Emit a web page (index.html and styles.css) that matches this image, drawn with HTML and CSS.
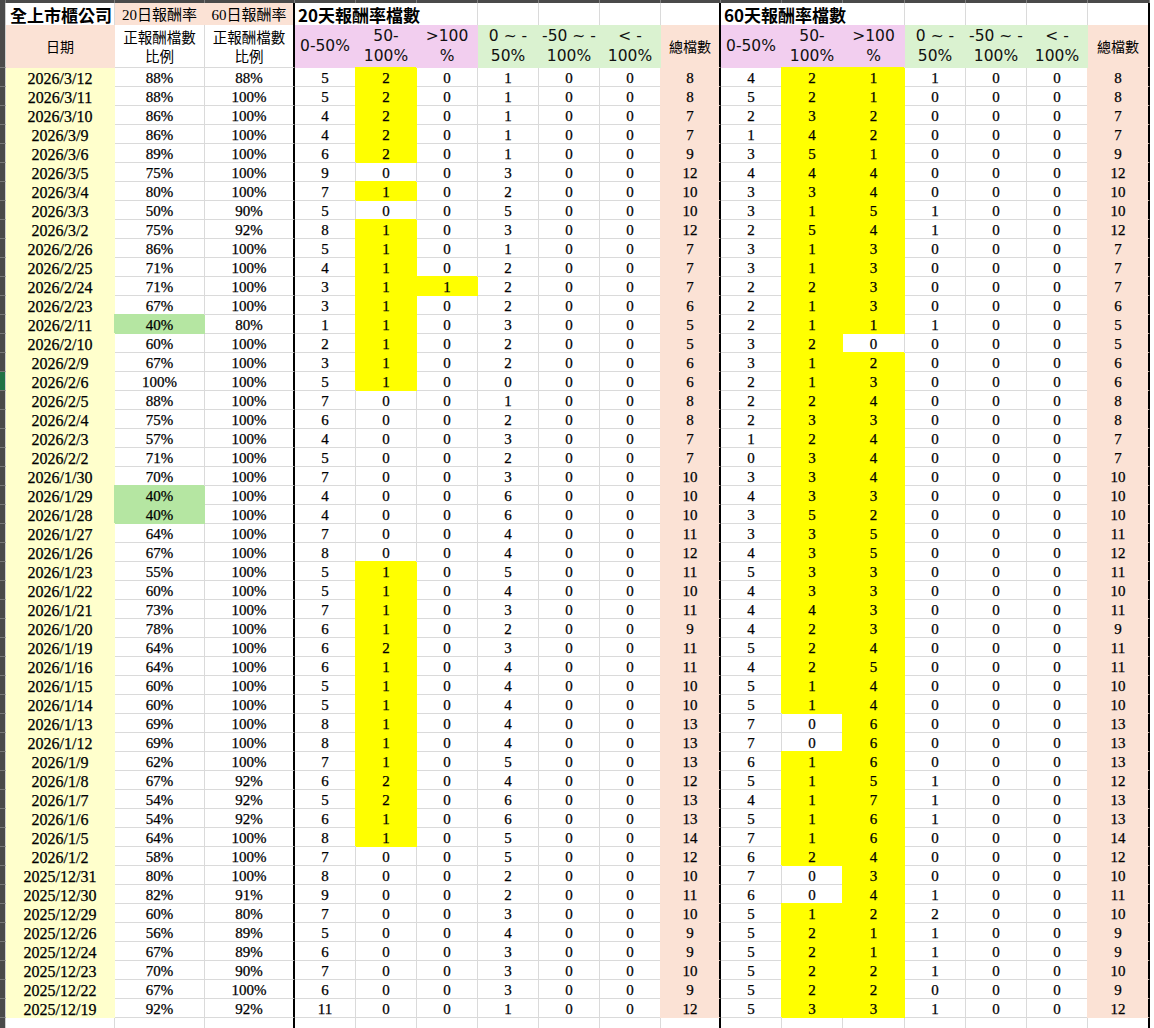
FILE: index.html
```html
<!DOCTYPE html>
<html lang="zh-Hant">
<head>
<meta charset="utf-8">
<title>全上市櫃公司 報酬率檔數</title>
<link rel="stylesheet" href="styles.css">
</head>
<body>
<table class="sheet">
<colgroup>
<col class="w-rh"><col class="w-a"><col class="w-b"><col class="w-b">
<col class="w-n"><col class="w-n"><col class="w-n"><col class="w-n"><col class="w-n"><col class="w-n"><col class="w-j">
<col class="w-n"><col class="w-n"><col class="w-m"><col class="w-n"><col class="w-n"><col class="w-n"><col class="w-m">
</colgroup>
<thead>
<tr class="top"><td></td><td></td><td></td><td></td><td></td><td></td><td></td><td></td><td></td><td></td><td></td><td></td><td></td><td></td><td></td><td></td><td></td><td></td></tr>
<tr class="r1">
<td class="rh"></td>
<td class="title">全上市櫃公司</td>
<td class="pe hs">20日報酬率</td>
<td class="pe hs sep">60日報酬率</td>
<td class="title" colspan="3">20天報酬率檔數</td>
<td></td><td></td><td></td><td class="sep"></td>
<td class="title" colspan="3">60天報酬率檔數</td>
<td></td><td></td><td></td><td class="sep"></td>
</tr>
<tr class="r2">
<td class="rh"></td>
<td class="pe cj">日期</td>
<td class="cj">正報酬檔數<br>比例</td>
<td class="cj sep">正報酬檔數<br>比例</td>
<td class="pk lt">0-50%</td>
<td class="pk lt">50-<br>100%</td>
<td class="pk lt">&gt;100<br>%</td>
<td class="gr lt">0 ~ -<br>50%</td>
<td class="gr lt">-50 ~ -<br>100%</td>
<td class="gr lt">&lt; -<br>100%</td>
<td class="pe cj sep">總檔數</td>
<td class="pk lt">0-50%</td>
<td class="pk lt">50-<br>100%</td>
<td class="pk lt">&gt;100<br>%</td>
<td class="gr lt">0 ~ -<br>50%</td>
<td class="gr lt">-50 ~ -<br>100%</td>
<td class="gr lt">&lt; -<br>100%</td>
<td class="pe cj sep">總檔數</td>
</tr>
</thead>
<tbody>
<tr><td></td><td>2026/3/12</td><td>88%</td><td>88%</td><td>5</td><td class="y">2</td><td>0</td><td>1</td><td>0</td><td>0</td><td>8</td><td>4</td><td class="y">2</td><td class="y">1</td><td>1</td><td>0</td><td>0</td><td>8</td></tr>
<tr><td></td><td>2026/3/11</td><td>88%</td><td>100%</td><td>5</td><td class="y">2</td><td>0</td><td>1</td><td>0</td><td>0</td><td>8</td><td>5</td><td class="y">2</td><td class="y">1</td><td>0</td><td>0</td><td>0</td><td>8</td></tr>
<tr><td></td><td>2026/3/10</td><td>86%</td><td>100%</td><td>4</td><td class="y">2</td><td>0</td><td>1</td><td>0</td><td>0</td><td>7</td><td>2</td><td class="y">3</td><td class="y">2</td><td>0</td><td>0</td><td>0</td><td>7</td></tr>
<tr><td></td><td>2026/3/9</td><td>86%</td><td>100%</td><td>4</td><td class="y">2</td><td>0</td><td>1</td><td>0</td><td>0</td><td>7</td><td>1</td><td class="y">4</td><td class="y">2</td><td>0</td><td>0</td><td>0</td><td>7</td></tr>
<tr><td></td><td>2026/3/6</td><td>89%</td><td>100%</td><td>6</td><td class="y">2</td><td>0</td><td>1</td><td>0</td><td>0</td><td>9</td><td>3</td><td class="y">5</td><td class="y">1</td><td>0</td><td>0</td><td>0</td><td>9</td></tr>
<tr><td></td><td>2026/3/5</td><td>75%</td><td>100%</td><td>9</td><td>0</td><td>0</td><td>3</td><td>0</td><td>0</td><td>12</td><td>4</td><td class="y">4</td><td class="y">4</td><td>0</td><td>0</td><td>0</td><td>12</td></tr>
<tr><td></td><td>2026/3/4</td><td>80%</td><td>100%</td><td>7</td><td class="y">1</td><td>0</td><td>2</td><td>0</td><td>0</td><td>10</td><td>3</td><td class="y">3</td><td class="y">4</td><td>0</td><td>0</td><td>0</td><td>10</td></tr>
<tr><td></td><td>2026/3/3</td><td>50%</td><td>90%</td><td>5</td><td>0</td><td>0</td><td>5</td><td>0</td><td>0</td><td>10</td><td>3</td><td class="y">1</td><td class="y">5</td><td>1</td><td>0</td><td>0</td><td>10</td></tr>
<tr><td></td><td>2026/3/2</td><td>75%</td><td>92%</td><td>8</td><td class="y">1</td><td>0</td><td>3</td><td>0</td><td>0</td><td>12</td><td>2</td><td class="y">5</td><td class="y">4</td><td>1</td><td>0</td><td>0</td><td>12</td></tr>
<tr><td></td><td>2026/2/26</td><td>86%</td><td>100%</td><td>5</td><td class="y">1</td><td>0</td><td>1</td><td>0</td><td>0</td><td>7</td><td>3</td><td class="y">1</td><td class="y">3</td><td>0</td><td>0</td><td>0</td><td>7</td></tr>
<tr><td></td><td>2026/2/25</td><td>71%</td><td>100%</td><td>4</td><td class="y">1</td><td>0</td><td>2</td><td>0</td><td>0</td><td>7</td><td>3</td><td class="y">1</td><td class="y">3</td><td>0</td><td>0</td><td>0</td><td>7</td></tr>
<tr><td></td><td>2026/2/24</td><td>71%</td><td>100%</td><td>3</td><td class="y">1</td><td class="y">1</td><td>2</td><td>0</td><td>0</td><td>7</td><td>2</td><td class="y">2</td><td class="y">3</td><td>0</td><td>0</td><td>0</td><td>7</td></tr>
<tr><td></td><td>2026/2/23</td><td>67%</td><td>100%</td><td>3</td><td class="y">1</td><td>0</td><td>2</td><td>0</td><td>0</td><td>6</td><td>2</td><td class="y">1</td><td class="y">3</td><td>0</td><td>0</td><td>0</td><td>6</td></tr>
<tr><td></td><td>2026/2/11</td><td class="g">40%</td><td>80%</td><td>1</td><td class="y">1</td><td>0</td><td>3</td><td>0</td><td>0</td><td>5</td><td>2</td><td class="y">1</td><td class="y">1</td><td>1</td><td>0</td><td>0</td><td>5</td></tr>
<tr><td></td><td>2026/2/10</td><td>60%</td><td>100%</td><td>2</td><td class="y">1</td><td>0</td><td>2</td><td>0</td><td>0</td><td>5</td><td>3</td><td class="y">2</td><td>0</td><td>0</td><td>0</td><td>0</td><td>5</td></tr>
<tr><td></td><td>2026/2/9</td><td>67%</td><td>100%</td><td>3</td><td class="y">1</td><td>0</td><td>2</td><td>0</td><td>0</td><td>6</td><td>3</td><td class="y">1</td><td class="y">2</td><td>0</td><td>0</td><td>0</td><td>6</td></tr>
<tr><td class="sel"></td><td>2026/2/6</td><td>100%</td><td>100%</td><td>5</td><td class="y">1</td><td>0</td><td>0</td><td>0</td><td>0</td><td>6</td><td>2</td><td class="y">1</td><td class="y">3</td><td>0</td><td>0</td><td>0</td><td>6</td></tr>
<tr><td></td><td>2026/2/5</td><td>88%</td><td>100%</td><td>7</td><td>0</td><td>0</td><td>1</td><td>0</td><td>0</td><td>8</td><td>2</td><td class="y">2</td><td class="y">4</td><td>0</td><td>0</td><td>0</td><td>8</td></tr>
<tr><td></td><td>2026/2/4</td><td>75%</td><td>100%</td><td>6</td><td>0</td><td>0</td><td>2</td><td>0</td><td>0</td><td>8</td><td>2</td><td class="y">3</td><td class="y">3</td><td>0</td><td>0</td><td>0</td><td>8</td></tr>
<tr><td></td><td>2026/2/3</td><td>57%</td><td>100%</td><td>4</td><td>0</td><td>0</td><td>3</td><td>0</td><td>0</td><td>7</td><td>1</td><td class="y">2</td><td class="y">4</td><td>0</td><td>0</td><td>0</td><td>7</td></tr>
<tr><td></td><td>2026/2/2</td><td>71%</td><td>100%</td><td>5</td><td>0</td><td>0</td><td>2</td><td>0</td><td>0</td><td>7</td><td>0</td><td class="y">3</td><td class="y">4</td><td>0</td><td>0</td><td>0</td><td>7</td></tr>
<tr><td></td><td>2026/1/30</td><td>70%</td><td>100%</td><td>7</td><td>0</td><td>0</td><td>3</td><td>0</td><td>0</td><td>10</td><td>3</td><td class="y">3</td><td class="y">4</td><td>0</td><td>0</td><td>0</td><td>10</td></tr>
<tr><td></td><td>2026/1/29</td><td class="g">40%</td><td>100%</td><td>4</td><td>0</td><td>0</td><td>6</td><td>0</td><td>0</td><td>10</td><td>4</td><td class="y">3</td><td class="y">3</td><td>0</td><td>0</td><td>0</td><td>10</td></tr>
<tr><td></td><td>2026/1/28</td><td class="g">40%</td><td>100%</td><td>4</td><td>0</td><td>0</td><td>6</td><td>0</td><td>0</td><td>10</td><td>3</td><td class="y">5</td><td class="y">2</td><td>0</td><td>0</td><td>0</td><td>10</td></tr>
<tr><td></td><td>2026/1/27</td><td>64%</td><td>100%</td><td>7</td><td>0</td><td>0</td><td>4</td><td>0</td><td>0</td><td>11</td><td>3</td><td class="y">3</td><td class="y">5</td><td>0</td><td>0</td><td>0</td><td>11</td></tr>
<tr><td></td><td>2026/1/26</td><td>67%</td><td>100%</td><td>8</td><td>0</td><td>0</td><td>4</td><td>0</td><td>0</td><td>12</td><td>4</td><td class="y">3</td><td class="y">5</td><td>0</td><td>0</td><td>0</td><td>12</td></tr>
<tr><td></td><td>2026/1/23</td><td>55%</td><td>100%</td><td>5</td><td class="y">1</td><td>0</td><td>5</td><td>0</td><td>0</td><td>11</td><td>5</td><td class="y">3</td><td class="y">3</td><td>0</td><td>0</td><td>0</td><td>11</td></tr>
<tr><td></td><td>2026/1/22</td><td>60%</td><td>100%</td><td>5</td><td class="y">1</td><td>0</td><td>4</td><td>0</td><td>0</td><td>10</td><td>4</td><td class="y">3</td><td class="y">3</td><td>0</td><td>0</td><td>0</td><td>10</td></tr>
<tr><td></td><td>2026/1/21</td><td>73%</td><td>100%</td><td>7</td><td class="y">1</td><td>0</td><td>3</td><td>0</td><td>0</td><td>11</td><td>4</td><td class="y">4</td><td class="y">3</td><td>0</td><td>0</td><td>0</td><td>11</td></tr>
<tr><td></td><td>2026/1/20</td><td>78%</td><td>100%</td><td>6</td><td class="y">1</td><td>0</td><td>2</td><td>0</td><td>0</td><td>9</td><td>4</td><td class="y">2</td><td class="y">3</td><td>0</td><td>0</td><td>0</td><td>9</td></tr>
<tr><td></td><td>2026/1/19</td><td>64%</td><td>100%</td><td>6</td><td class="y">2</td><td>0</td><td>3</td><td>0</td><td>0</td><td>11</td><td>5</td><td class="y">2</td><td class="y">4</td><td>0</td><td>0</td><td>0</td><td>11</td></tr>
<tr><td></td><td>2026/1/16</td><td>64%</td><td>100%</td><td>6</td><td class="y">1</td><td>0</td><td>4</td><td>0</td><td>0</td><td>11</td><td>4</td><td class="y">2</td><td class="y">5</td><td>0</td><td>0</td><td>0</td><td>11</td></tr>
<tr><td></td><td>2026/1/15</td><td>60%</td><td>100%</td><td>5</td><td class="y">1</td><td>0</td><td>4</td><td>0</td><td>0</td><td>10</td><td>5</td><td class="y">1</td><td class="y">4</td><td>0</td><td>0</td><td>0</td><td>10</td></tr>
<tr><td></td><td>2026/1/14</td><td>60%</td><td>100%</td><td>5</td><td class="y">1</td><td>0</td><td>4</td><td>0</td><td>0</td><td>10</td><td>5</td><td class="y">1</td><td class="y">4</td><td>0</td><td>0</td><td>0</td><td>10</td></tr>
<tr><td></td><td>2026/1/13</td><td>69%</td><td>100%</td><td>8</td><td class="y">1</td><td>0</td><td>4</td><td>0</td><td>0</td><td>13</td><td>7</td><td>0</td><td class="y">6</td><td>0</td><td>0</td><td>0</td><td>13</td></tr>
<tr><td></td><td>2026/1/12</td><td>69%</td><td>100%</td><td>8</td><td class="y">1</td><td>0</td><td>4</td><td>0</td><td>0</td><td>13</td><td>7</td><td>0</td><td class="y">6</td><td>0</td><td>0</td><td>0</td><td>13</td></tr>
<tr><td></td><td>2026/1/9</td><td>62%</td><td>100%</td><td>7</td><td class="y">1</td><td>0</td><td>5</td><td>0</td><td>0</td><td>13</td><td>6</td><td class="y">1</td><td class="y">6</td><td>0</td><td>0</td><td>0</td><td>13</td></tr>
<tr><td></td><td>2026/1/8</td><td>67%</td><td>92%</td><td>6</td><td class="y">2</td><td>0</td><td>4</td><td>0</td><td>0</td><td>12</td><td>5</td><td class="y">1</td><td class="y">5</td><td>1</td><td>0</td><td>0</td><td>12</td></tr>
<tr><td></td><td>2026/1/7</td><td>54%</td><td>92%</td><td>5</td><td class="y">2</td><td>0</td><td>6</td><td>0</td><td>0</td><td>13</td><td>4</td><td class="y">1</td><td class="y">7</td><td>1</td><td>0</td><td>0</td><td>13</td></tr>
<tr><td></td><td>2026/1/6</td><td>54%</td><td>92%</td><td>6</td><td class="y">1</td><td>0</td><td>6</td><td>0</td><td>0</td><td>13</td><td>5</td><td class="y">1</td><td class="y">6</td><td>1</td><td>0</td><td>0</td><td>13</td></tr>
<tr><td></td><td>2026/1/5</td><td>64%</td><td>100%</td><td>8</td><td class="y">1</td><td>0</td><td>5</td><td>0</td><td>0</td><td>14</td><td>7</td><td class="y">1</td><td class="y">6</td><td>0</td><td>0</td><td>0</td><td>14</td></tr>
<tr><td></td><td>2026/1/2</td><td>58%</td><td>100%</td><td>7</td><td>0</td><td>0</td><td>5</td><td>0</td><td>0</td><td>12</td><td>6</td><td class="y">2</td><td class="y">4</td><td>0</td><td>0</td><td>0</td><td>12</td></tr>
<tr><td></td><td>2025/12/31</td><td>80%</td><td>100%</td><td>8</td><td>0</td><td>0</td><td>2</td><td>0</td><td>0</td><td>10</td><td>7</td><td>0</td><td class="y">3</td><td>0</td><td>0</td><td>0</td><td>10</td></tr>
<tr><td></td><td>2025/12/30</td><td>82%</td><td>91%</td><td>9</td><td>0</td><td>0</td><td>2</td><td>0</td><td>0</td><td>11</td><td>6</td><td>0</td><td class="y">4</td><td>1</td><td>0</td><td>0</td><td>11</td></tr>
<tr><td></td><td>2025/12/29</td><td>60%</td><td>80%</td><td>7</td><td>0</td><td>0</td><td>3</td><td>0</td><td>0</td><td>10</td><td>5</td><td class="y">1</td><td class="y">2</td><td>2</td><td>0</td><td>0</td><td>10</td></tr>
<tr><td></td><td>2025/12/26</td><td>56%</td><td>89%</td><td>5</td><td>0</td><td>0</td><td>4</td><td>0</td><td>0</td><td>9</td><td>5</td><td class="y">2</td><td class="y">1</td><td>1</td><td>0</td><td>0</td><td>9</td></tr>
<tr><td></td><td>2025/12/24</td><td>67%</td><td>89%</td><td>6</td><td>0</td><td>0</td><td>3</td><td>0</td><td>0</td><td>9</td><td>5</td><td class="y">2</td><td class="y">1</td><td>1</td><td>0</td><td>0</td><td>9</td></tr>
<tr><td></td><td>2025/12/23</td><td>70%</td><td>90%</td><td>7</td><td>0</td><td>0</td><td>3</td><td>0</td><td>0</td><td>10</td><td>5</td><td class="y">2</td><td class="y">2</td><td>1</td><td>0</td><td>0</td><td>10</td></tr>
<tr><td></td><td>2025/12/22</td><td>67%</td><td>100%</td><td>6</td><td>0</td><td>0</td><td>3</td><td>0</td><td>0</td><td>9</td><td>5</td><td class="y">2</td><td class="y">2</td><td>0</td><td>0</td><td>0</td><td>9</td></tr>
<tr><td></td><td>2025/12/19</td><td>92%</td><td>92%</td><td>11</td><td>0</td><td>0</td><td>1</td><td>0</td><td>0</td><td>12</td><td>5</td><td class="y">3</td><td class="y">3</td><td>1</td><td>0</td><td>0</td><td>12</td></tr>
<tr class="empty"><td></td><td></td><td></td><td></td><td></td><td></td><td></td><td></td><td></td><td></td><td></td><td></td><td></td><td></td><td></td><td></td><td></td><td></td></tr>
</tbody>
</table>
</body>
</html>
```
FILE: styles.css
```css
html, body {
  margin: 0;
  padding: 0;
  background: #ffffff;
}

.sheet {
  border-collapse: separate;
  border-spacing: 0;
  table-layout: fixed;
  width: 1150px;
  font-family: "Liberation Serif", "Times New Roman", "Noto Sans CJK TC", serif;
  font-size: 15px;
  color: #000;
}

.w-rh { width: 6px; }
.w-a { width: 109px; }
.w-b { width: 90px; }
.w-n { width: 61px; }
.w-j { width: 60px; }
.w-m { width: 62px; }

.sheet td {
  padding: 3px 0 0 0;
  height: 15px;
  line-height: 15px;
  border-right: 1px solid #dadada;
  border-bottom: 1px solid #dadada;
  text-align: center;
  white-space: nowrap;
  overflow: hidden;
}

.sheet tbody td {
  -webkit-text-stroke: 0.25px #000;
}

/* spreadsheet frame: column header strip */
.sheet tr.top td {
  height: 3px;
  padding: 0;
  line-height: 0;
  font-size: 0;
  background: #4a4a4a;
  border-bottom: 0;
  border-right: 1px solid #7e7e7e;
}

/* spreadsheet frame: row header strip */
.sheet td.rh,
.sheet tbody td:first-child {
  background: #4a4a4a;
  border-right: 1px solid #cfcfcf;
  border-bottom: 1px solid #767676;
}
.sheet tbody td.sel {
  background: #217346;
}

/* title row */
.sheet tr.r1 td {
  height: 20px;
  padding-top: 2px;
  line-height: 20px;
  border-bottom: 0;
  overflow: visible;
}
.sheet td.title {
  text-align: left;
  padding-left: 3px;
  font-family: "Noto Sans CJK TC", "Noto Sans", sans-serif;
  font-weight: 700;
  font-size: 17px;
}
.sheet tr.r1 td.title:nth-child(2) {
  padding-left: 4px;
}
.sheet td.hs {
  font-family: "Liberation Serif", "Noto Sans CJK TC", serif;
  font-size: 15px;
}

/* header row */
.sheet tr.r2 td {
  height: 42px;
  padding: 0;
  line-height: 20px;
  vertical-align: middle;
}
.sheet td.cj {
  font-family: "Noto Sans CJK TC", sans-serif;
  font-size: 14.5px;
}
.sheet tr.r2 td.cj {
  line-height: 19px;
}
.sheet td.lt {
  font-family: "DejaVu Sans", "Noto Sans", sans-serif;
  font-size: 15.5px;
  color: #111;
}

/* fills */
.sheet td.pe {
  background: #fbe2d5;
  border-right-color: #fbe2d5;
  border-bottom-color: #fbe2d5;
}
.sheet td.pk {
  background: #f2ceef;
  border-right-color: #f2ceef;
  border-bottom-color: #f2ceef;
}
.sheet td.gr {
  background: #daf2d0;
  border-right-color: #daf2d0;
  border-bottom-color: #daf2d0;
}
.sheet tr.r2 td.pe.cj {
  font-size: 14px;
}

/* body columns */
.sheet tbody td:nth-child(2) {
  background: #ffffcc;
  border-right-color: #ffffcc;
  border-bottom-color: #ffffcc;
  font-size: 16px;
}
.sheet tbody td:nth-child(11),
.sheet tbody td:nth-child(18) {
  background: #fbe2d5;
  border-bottom-color: #fbe2d5;
  box-shadow: -1px 0 0 #fbe2d5;
}
.sheet td.y {
  background: #ffff00;
  border-right-color: #ffff00;
  border-bottom-color: #ffff00;
  box-shadow: -1px -1px 0 #ffff00;
}
.sheet td.g {
  background: #b5e6a2;
  border-right-color: #b5e6a2;
  border-bottom-color: #b5e6a2;
  box-shadow: -1px -1px 0 #b5e6a2;
}

/* thick black separators */
.sheet td.sep,
.sheet tbody td:nth-child(4),
.sheet tbody td:nth-child(11),
.sheet tbody td:nth-child(18) {
  border-right: 2px solid #000;
}

/* trailing empty row */
.sheet tbody tr.empty td:not(:first-child) {
  background: #ffffff;
  border-bottom-color: #dadada;
  box-shadow: none;
}
.sheet tbody tr.empty td:nth-child(2) {
  border-right-color: #dadada;
}
```
